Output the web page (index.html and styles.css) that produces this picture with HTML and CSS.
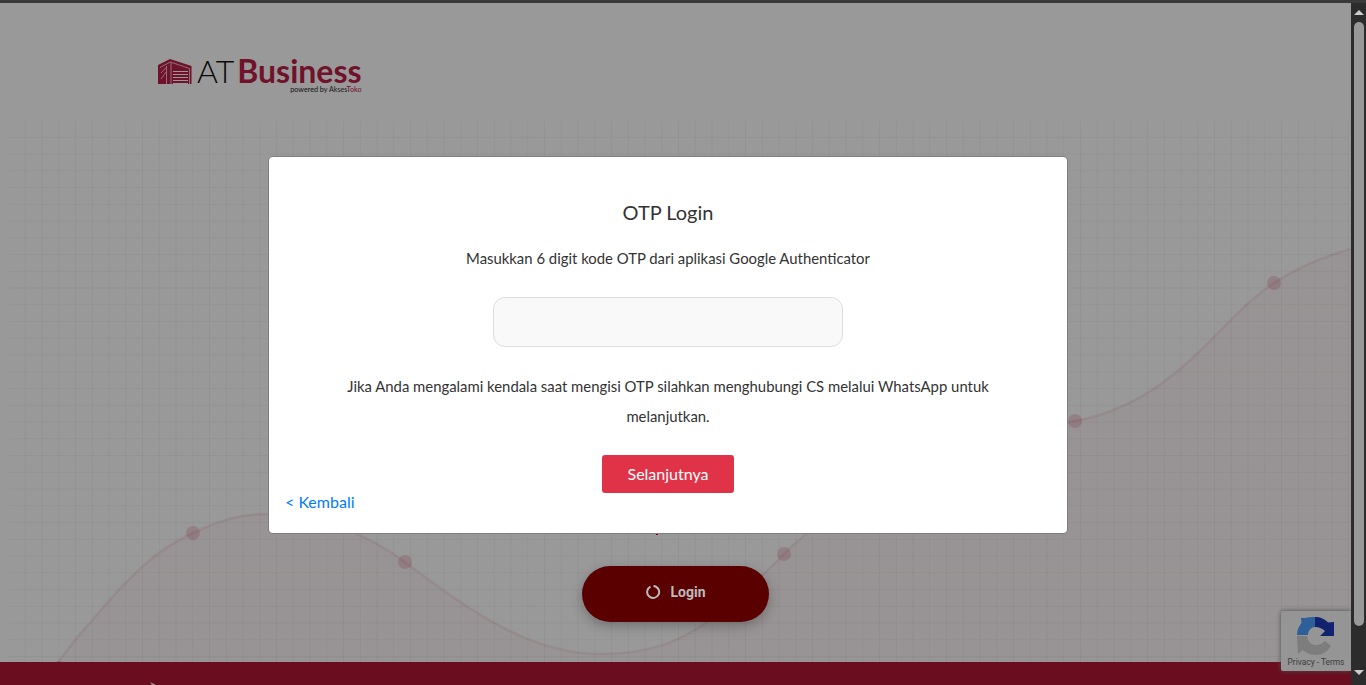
FILE: index.html
```html
<!DOCTYPE html>
<html lang="en">
<head>
  <meta charset="UTF-8">
  <title>AT Business - Login</title>
  <link rel="stylesheet" href="styles.css">
</head>
<body>
  <div class="top-strip"></div>
  <div class="window">
    <div class="page">
      <header class="header">
        <div class="logo">
          <svg class="logo-mark" viewBox="0 0 34 25" width="34" height="25">
            <path class="mark-fill" d="M0 6 12 0 33.500 7V25H0Z"/>
            <path class="mark-line" d="M2 8.500 12.500 3 31.500 9.500V25M8.500 7V25M13 3.500V25M3 14 8 8.500M3 20 8 13"/>
            <path class="mark-door" d="M15 12.500H30M15 15.500H30M15 18.500H30M15 21.500H30M15 24.500H30"/>
          </svg>
          <div class="logo-text">
            <div class="logo-name"><span class="logo-at">AT</span><span class="logo-biz">Business</span></div>
            <div class="logo-sub">powered by <span class="logo-akses">Akses</span><span class="logo-toko">Toko</span></div>
          </div>
        </div>
      </header>

      <section class="hero">
        <div class="grid-bg"></div>
        <svg class="chart" viewBox="0 0 1351 541" width="1351" height="541">
          <path class="chart-area" d="M50 552C70 525 80 512 90 502C115 472 135 450 160 431C172 423 182 417 193 412C208 405 220 400 233 397C245 394 256 393 267 393C320 393 370 415 405 441C470 490 530 533 600 533C650 533 680 520 707 501C735 480 760 458 784 433C830 385 950 320 1075 300C1130 290 1170 260 1205 225C1230 200 1250 178 1274 162C1300 145 1325 135 1351 128V552Z"/>
          <path class="chart-line" d="M50 552C70 525 80 512 90 502C115 472 135 450 160 431C172 423 182 417 193 412C208 405 220 400 233 397C245 394 256 393 267 393C320 393 370 415 405 441C470 490 530 533 600 533C650 533 680 520 707 501C735 480 760 458 784 433C830 385 950 320 1075 300C1130 290 1170 260 1205 225C1230 200 1250 178 1274 162C1300 145 1325 135 1351 128"/>
          <circle class="chart-dot" cx="59" cy="547" r="7"/>
          <circle class="chart-dot" cx="193" cy="412" r="7"/>
          <circle class="chart-dot" cx="405" cy="441" r="7"/>
          <circle class="chart-dot" cx="784" cy="433" r="7"/>
          <circle class="chart-dot" cx="1075" cy="300" r="7"/>
          <circle class="chart-dot" cx="1274" cy="162" r="7"/>
        </svg>
        <div class="login-error"></div>
      </section>

      <footer class="footer">
        <svg class="footer-mark" viewBox="0 0 12 6" width="12" height="6"><path d="M0 0 12 6H4Z"/></svg>
      </footer>

      <div class="recaptcha">
        <svg viewBox="0 0 38 38" width="38" height="38">
          <path class="rc-grey" d="M0 19H10C10.500 24 14 28 19 28C23 28 26 26 28 24L34 29C30 35 25 38 19 38C14 38 9 36 6 33L1 37Z"/>
          <path class="rc-blue" d="M18 0V10C14 10 11 14 11 18H0C0 13 2 9 4.500 6L4 1H8C11 0 15 0 18 0Z"/>
          <path class="rc-navy" d="M18 0C23 0 28 2 31 5.500L37 5V19H23L28 14C26 12 22 10 18 10Z"/>
        </svg>
        <div class="rc-links">Privacy - Terms</div>
      </div>

      <div class="scrim">
        <div class="modal">
          <h5 class="modal-title">OTP Login</h5>
          <p class="modal-lead">Masukkan 6 digit kode OTP dari aplikasi Google Authenticator</p>
          <input class="otp-input" type="text" aria-label="Kode OTP">
          <p class="modal-help">Jika Anda mengalami kendala saat mengisi OTP silahkan menghubungi CS melalui WhatsApp untuk melanjutkan.</p>
          <div class="modal-actions">
            <a class="back-link" href="#">&lt; Kembali</a>
            <button class="btn-next" type="button">Selanjutnya</button>
          </div>
        </div>
      </div>

      <button class="btn-login" type="button">
        <svg class="spinner" viewBox="0 0 16 16" width="16" height="16"><path d="M5.500 2.600A6 6 0 1 0 8.500 2"/></svg>
        Login
      </button>
    </div>

    <div class="scrollbar">
      <div class="arrow-up"></div>
      <div class="thumb"></div>
      <div class="arrow-down"></div>
    </div>
  </div>
</body>
</html>
```

FILE: styles.css
```css
html, body {
  height: 100%;
}
body {
  margin: 0;
  display: flex;
  flex-direction: column;
  overflow: hidden;
  background-color: #333;
  font-family: "Lato", "Open Sans", sans-serif;
}
.top-strip {
  height: 3px;
  background-color: #3a3a3a;
}
.window {
  flex: 1;
  display: flex;
  min-height: 0;
}
.page {
  flex: 1;
  position: relative;
  display: flex;
  flex-direction: column;
  overflow: hidden;
  background-color: #fff;
}

/* logo */
.header {
  height: 118px;
  padding: 52px 0 0 158px;
  box-sizing: border-box;
}
.logo {
  display: flex;
  align-items: flex-start;
  gap: 5px;
}
.logo-mark {
  margin-top: 4px;
}
.mark-fill {
  fill: #bb2147;
}
.mark-line {
  fill: none;
  stroke: #fff;
  stroke-width: .7;
}
.mark-door {
  fill: none;
  stroke: #fff;
  stroke-width: 1.2;
}
.logo-name {
  display: flex;
  gap: 3px;
  line-height: 32px;
  height: 32px;
}
.logo-at {
  font-size: 32px;
  font-weight: 300;
  color: #111;
}
.logo-biz {
  font-size: 32px;
  font-weight: 700;
  color: #bb2147;
}
.logo-sub {
  font-size: 7.2px;
  line-height: 8px;
  margin-top: -1px;
  text-align: right;
  color: #222;
}
.logo-akses {
  color: #333;
}
.logo-toko {
  color: #bb2147;
}

/* chart background */
.hero {
  flex: 1;
  position: relative;
}
.grid-bg {
  position: absolute;
  left: 9px;
  right: 2px;
  top: 0;
  bottom: 0;
  background-image:
    linear-gradient(to right, transparent 15.75px, rgba(0, 0, 0, .04) 15.75px),
    linear-gradient(to bottom, transparent 15.75px, rgba(0, 0, 0, .04) 15.75px);
  background-size: 16.75px 16.75px;
}
.chart {
  position: absolute;
  left: 0;
  top: 0;
}
.chart-area {
  fill: rgba(190, 30, 70, .035);
}
.chart-line {
  fill: none;
  stroke: rgba(190, 30, 70, .09);
  stroke-width: 2.5;
}
.chart-dot {
  fill: rgba(190, 30, 70, .18);
}
.login-error {
  position: absolute;
  left: 656px;
  top: 408px;
  width: 2px;
  height: 6px;
  background-color: #d00;
}

.footer {
  height: 23px;
  background-color: #b11732;
}
.footer-mark {
  display: block;
  margin: 20px 0 0 150px;
  fill: #fff;
}

/* recaptcha badge */
.recaptcha {
  position: absolute;
  right: 0;
  top: 608px;
  width: 70px;
  height: 60px;
  display: flex;
  flex-direction: column;
  align-items: center;
  background-color: #f9f9f9;
  border-radius: 2px 0 0 2px;
  box-shadow: 0 0 5px #808080;
  font-family: "Roboto", sans-serif;
}
.recaptcha svg {
  margin-top: 6px;
}
.rc-blue {
  fill: #4b9eff;
}
.rc-navy {
  fill: #213ab7;
}
.rc-grey {
  fill: #d0d0d0;
}
.rc-links {
  font-size: 8.4px;
  line-height: 10px;
  margin-top: 2px;
  color: #666;
  white-space: nowrap;
}

/* modal */
.scrim {
  position: absolute;
  inset: 0;
  padding: 153px 15px 0 0;
  display: flex;
  justify-content: center;
  align-items: flex-start;
  background-color: rgba(0, 0, 0, .4);
}
.modal {
  width: 800px;
  box-sizing: border-box;
  height: 378px;
  padding: 43px 16px 19px;
  display: flex;
  flex-direction: column;
  align-items: center;
  background-color: #fff;
  border: 1px solid rgba(0, 0, 0, .5);
  border-radius: 5px;
  color: #333;
}
.modal-title {
  margin: 0;
  font-size: 20px;
  font-weight: 400;
  line-height: 24px;
}
.modal-lead {
  margin: 22px 0 0;
  font-size: 14.88px;
  line-height: 24px;
}
.otp-input {
  width: 350px;
  height: 50px;
  box-sizing: border-box;
  margin-top: 27px;
  background-color: #f9f9f9;
  border: 1px solid #ddd;
  border-radius: 12px;
}
.modal-help {
  width: 680px;
  margin: 24px 0 0;
  font-size: 14.88px;
  line-height: 30px;
  text-align: center;
}
.modal-actions {
  flex: 1;
  align-self: stretch;
  margin-top: 24px;
  display: grid;
  grid-template-columns: 1fr auto 1fr;
}
.back-link {
  align-self: end;
  font-size: 16px;
  line-height: 24px;
  color: #007bff;
  text-decoration: none;
}
.btn-next {
  align-self: start;
  width: 132px;
  height: 38px;
  padding: 0 0 2px;
  border: 0;
  border-radius: 3px;
  background-color: #e03347;
  color: #fff;
  font-family: inherit;
  font-size: 16px;
}

/* sits above the scrim in the capture, so colours are the dimmed ones */
.btn-login {
  position: absolute;
  left: 582px;
  top: 563px;
  width: 187px;
  height: 56px;
  padding: 0 0 4px;
  display: flex;
  align-items: center;
  justify-content: center;
  gap: 9px;
  border: 0;
  border-radius: 28px;
  background-color: #5a0000;
  box-shadow: 0 4px 12px rgba(0, 0, 0, .25);
  color: #bbb;
  font-family: "Roboto", sans-serif;
  font-size: 14px;
  font-weight: 700;
}
.spinner {
  fill: none;
  stroke: #bbb;
  stroke-width: 2;
}

/* fake scrollbar */
.scrollbar {
  width: 15px;
  display: flex;
  flex-direction: column;
  align-items: center;
  background-color: #2c2c2c;
}
.arrow-up {
  margin-top: 7px;
  border-left: 5px solid transparent;
  border-right: 5px solid transparent;
  border-bottom: 5px solid #ccc;
}
.thumb {
  width: 10px;
  height: 604px;
  margin-top: 7px;
  border-radius: 5px;
  background-color: #999;
}
.arrow-down {
  margin-top: 44px;
  border-left: 5px solid transparent;
  border-right: 5px solid transparent;
  border-top: 5px solid #ccc;
}
```
